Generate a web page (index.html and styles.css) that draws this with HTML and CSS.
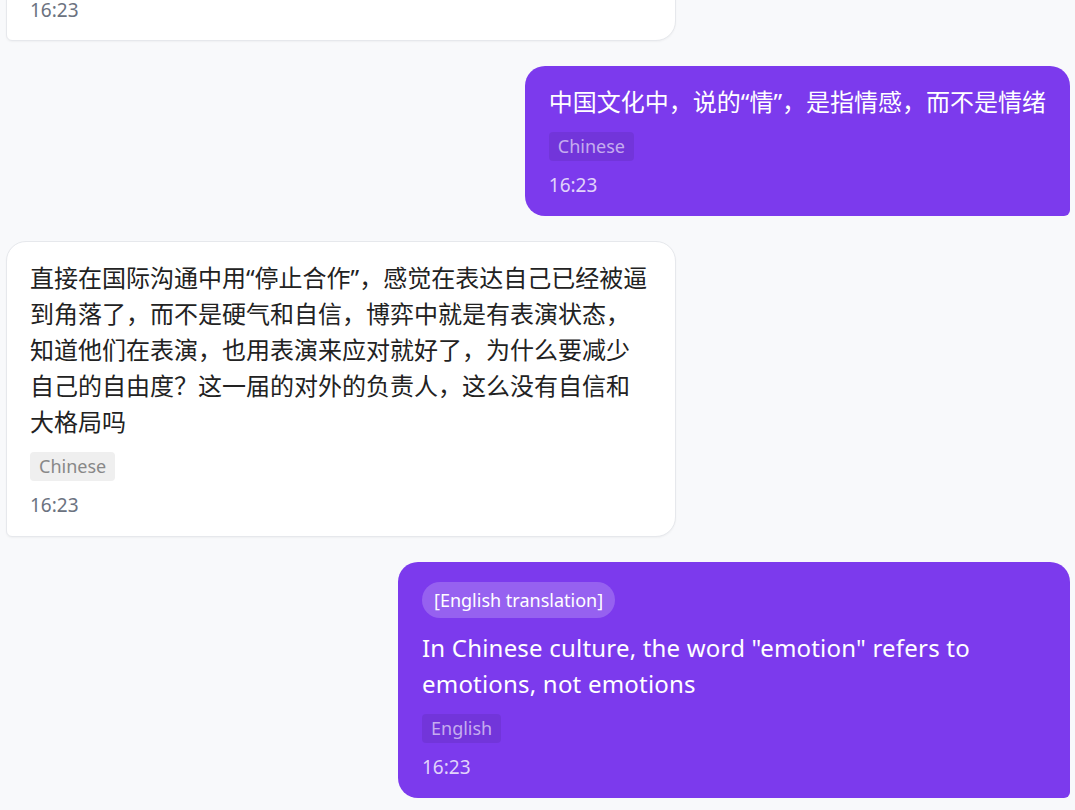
FILE: index.html
```html
<!DOCTYPE html>
<html lang="zh-CN">
<head>
<meta charset="utf-8">
<title>Chat</title>
<link rel="stylesheet" href="styles.css">
</head>
<body>
<div class="chat">
  <div class="row row-in first">
    <div class="bubble bubble-in bubble-full">
      <div class="time">16:23</div>
    </div>
  </div>
  <div class="row row-out">
    <div class="bubble bubble-out">
      <div class="text">中国文化中，说的“情”，是指情感，而不是情绪</div>
      <span class="tag">Chinese</span>
      <div class="time">16:23</div>
    </div>
  </div>
  <div class="row row-in">
    <div class="bubble bubble-in">
      <div class="text">直接在国际沟通中用“停止合作”，感觉在表达自己已经被逼到角落了，而不是硬气和自信，博弈中就是有表演状态，知道他们在表演，也用表演来应对就好了，为什么要减少自己的自由度？这一届的对外的负责人，这么没有自信和大格局吗</div>
      <span class="tag">Chinese</span>
      <div class="time">16:23</div>
    </div>
  </div>
  <div class="row row-out">
    <div class="bubble bubble-out">
      <span class="pill">[English translation]</span>
      <div class="text text-en">In Chinese culture, the word "emotion" refers to emotions, not emotions</div>
      <span class="tag">English</span>
      <div class="time">16:23</div>
    </div>
  </div>
</div>
</body>
</html>
```

FILE: styles.css
```css
* { box-sizing: border-box; }
html, body {
  margin: 0;
  padding: 0;
  height: 100%;
  overflow: hidden;
  background: #f8f9fb;
}
body {
  font-family: "Noto Sans", "Noto Sans CJK SC", sans-serif;
  color: #1f2937;
}
.chat {
  display: flex;
  flex-direction: column;
  gap: 25px;
  padding: 0 5px 0 6px;
}
.row { display: flex; }
.row-in { justify-content: flex-start; }
.row-out { justify-content: flex-end; }
.first { margin-top: -22px; }
.bubble {
  max-width: 672px;
  padding: 18px 24px;
  border-radius: 20px;
  display: flex;
  flex-direction: column;
  align-items: flex-start;
}
.bubble-in {
  max-width: 670px;
  background: #ffffff;
  border: 1px solid #e6e8ec;
  border-bottom-left-radius: 6px;
  box-shadow: 0 1px 2px rgba(0, 0, 0, 0.04);
  padding: 18px 23px 18px;
}
.bubble-full { width: 670px; }
.bubble-out {
  background: #7c3aed;
  color: #ffffff;
  border-bottom-right-radius: 6px;
}
.text {
  font-size: 24px;
  line-height: 36px;
  color: #222222;
}
.bubble-out .text { color: #ffffff; }
.text-en { letter-spacing: 0.2px; }
.tag {
  margin-top: 12px;
  font-size: 18px;
  line-height: 29px;
  padding: 0 9px;
  border-radius: 4px;
  background: #efefef;
  color: #888888;
}
.bubble-out .tag {
  background: rgba(0, 0, 0, 0.08);
  color: rgba(255, 255, 255, 0.6);
}
.time {
  margin-top: 11px;
  font-size: 19px;
  line-height: 26px;
  color: #6b7280;
}
.bubble-out .time { color: rgba(255, 255, 255, 0.78); }
.first .time { margin-top: 0; }
.first .bubble-in { padding-bottom: 17px; }
.pill {
  margin-top: 2px;
  margin-bottom: 12px;
  font-size: 18px;
  line-height: 36px;
  padding: 0 12px;
  border-radius: 18px;
  background: rgba(255, 255, 255, 0.2);
  color: #ffffff;
}
```
